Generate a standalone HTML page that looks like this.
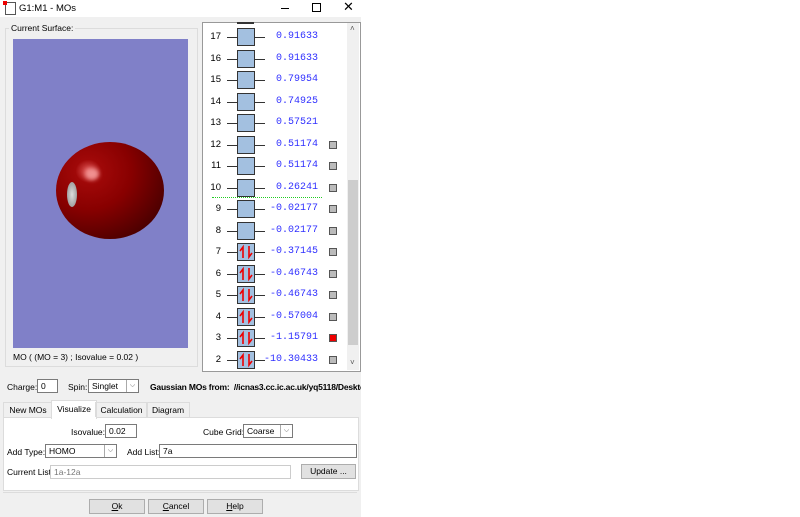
<!DOCTYPE html>
<html><head><style>
body{margin:0;width:800px;height:517px;background:#fff;font-family:"Liberation Sans",sans-serif;font-size:8.5px;color:#000;position:relative;overflow:hidden}
.win{position:absolute;left:0;top:0;width:361px;height:517px;background:#f0f0f0;overflow:hidden}
.a{position:absolute;white-space:nowrap}
.row{position:absolute;left:203px;height:18px;width:144px}
.num{position:absolute;left:0;width:18px;text-align:right;font-size:9.5px;top:3px}
.ln{position:absolute;left:24px;width:38px;top:9px;height:1px;background:#333}
.box{position:absolute;left:34px;top:0;width:16px;height:16px;background:#a3c0e0;border:1px solid #333}
.val{position:absolute;left:50px;width:65px;text-align:right;font-family:"Liberation Mono",monospace;font-size:10px;color:#3030ff;top:3px;white-space:nowrap}
.sq{position:absolute;left:126px;top:5px;width:6px;height:6px;background:#bbb;border:1px solid #555}
.box svg{position:absolute;left:0;top:0}
.inp{position:absolute;background:#fff;border:1px solid #7a7a7a;height:12px;font-size:8.5px;padding-left:3px;line-height:12px;white-space:nowrap}
.btn{position:absolute;background:#e1e1e1;border:1px solid #adadad;height:13px;text-align:center;font-size:8.5px;line-height:13px}
.dd{position:absolute;right:0;top:0;width:11px;height:12px;border-left:1px solid #aaa;font-size:7px;text-align:center;line-height:12px;color:#555}
</style></head><body>
<svg width="0" height="0" style="position:absolute"><defs><g id="ud"><path d="M5 14V3L2 7M11 2V13L14 9" stroke="#e00" stroke-width="1.6" fill="none"/></g></defs></svg>
<div class="win">
<div class="a" style="left:0;top:0;width:361px;height:17px;background:#fff"></div>
<div class="a" style="left:5px;top:2px;width:9px;height:11px;border:1px solid #555;background:#fff"></div>
<div class="a" style="left:3px;top:1px;width:4px;height:4px;background:#e00"></div>
<div class="a" style="left:19px;top:3px;font-size:9.5px">G1:M1 - MOs</div>
<div class="a" style="left:281px;top:8px;width:8px;height:1px;background:#000"></div>
<div class="a" style="left:312px;top:3px;width:7px;height:7px;border:1px solid #000"></div>
<div class="a" style="left:343px;top:-1px;font-size:13px">✕</div>

<div class="a" style="left:5px;top:28px;width:191px;height:337px;border:1px solid #dcdcdc"></div>
<div class="a" style="left:9px;top:23px;background:#f0f0f0;padding:0 2px">Current Surface:</div>
<div class="a" style="left:13px;top:39px;width:175px;height:309px;background:#8080c8;overflow:hidden">
<div class="a" style="left:43px;top:103px;width:108px;height:97px;border-radius:50%;background:radial-gradient(ellipse at 30% 30%,#e35a5a 0%,#a00808 12%,#880000 40%,#4a0000 80%,#2a0000 100%)"></div>
<div class="a" style="left:72px;top:129px;width:14px;height:12px;border-radius:50%;background:#f09090;filter:blur(2px)"></div>
<div class="a" style="left:54px;top:143px;width:10px;height:25px;border-radius:50%;background:radial-gradient(#ddd,#888)"></div>
</div>
<div class="a" style="left:13px;top:352px">MO ( (MO = 3) ; Isovalue = 0.02 )</div>

<div class="a" style="left:202px;top:22px;width:157px;height:348px;background:#fff;border:1px solid #999"></div>
<div class="a" style="left:347px;top:23px;width:12px;height:347px;background:#f0f0f0"></div>
<div class="a" style="left:348px;top:180px;width:10px;height:165px;background:#cdcdcd"></div>
<div class="a" style="left:350px;top:24px;font-size:8px;color:#555">˄</div>
<div class="a" style="left:350px;top:358px;font-size:8px;color:#555">˅</div>
<div class="a" style="left:237px;top:22px;width:17px;height:2px;background:#333"></div>
<div class="a" style="left:212px;top:197px;width:110px;border-top:1px dotted #2c2"></div>

<div class="row" style="top:28px"><div class="num">17</div><div class="ln"></div><div class="box"></div><div class="val">0.91633</div></div>
<div class="row" style="top:50px"><div class="num">16</div><div class="ln"></div><div class="box"></div><div class="val">0.91633</div></div>
<div class="row" style="top:71px"><div class="num">15</div><div class="ln"></div><div class="box"></div><div class="val">0.79954</div></div>
<div class="row" style="top:93px"><div class="num">14</div><div class="ln"></div><div class="box"></div><div class="val">0.74925</div></div>
<div class="row" style="top:114px"><div class="num">13</div><div class="ln"></div><div class="box"></div><div class="val">0.57521</div></div>
<div class="row" style="top:136px"><div class="num">12</div><div class="ln"></div><div class="box"></div><div class="val">0.51174</div><div class="sq"></div></div>
<div class="row" style="top:157px"><div class="num">11</div><div class="ln"></div><div class="box"></div><div class="val">0.51174</div><div class="sq"></div></div>
<div class="row" style="top:179px"><div class="num">10</div><div class="ln"></div><div class="box"></div><div class="val">0.26241</div><div class="sq"></div></div>
<div class="row" style="top:200px"><div class="num">9</div><div class="ln"></div><div class="box"></div><div class="val">-0.02177</div><div class="sq"></div></div>
<div class="row" style="top:222px"><div class="num">8</div><div class="ln"></div><div class="box"></div><div class="val">-0.02177</div><div class="sq"></div></div>
<div class="row" style="top:243px"><div class="num">7</div><div class="ln"></div><div class="box"><svg width="16" height="16"><use href="#ud"/></svg></div><div class="val">-0.37145</div><div class="sq"></div></div>
<div class="row" style="top:265px"><div class="num">6</div><div class="ln"></div><div class="box"><svg width="16" height="16"><use href="#ud"/></svg></div><div class="val">-0.46743</div><div class="sq"></div></div>
<div class="row" style="top:286px"><div class="num">5</div><div class="ln"></div><div class="box"><svg width="16" height="16"><use href="#ud"/></svg></div><div class="val">-0.46743</div><div class="sq"></div></div>
<div class="row" style="top:308px"><div class="num">4</div><div class="ln"></div><div class="box"><svg width="16" height="16"><use href="#ud"/></svg></div><div class="val">-0.57004</div><div class="sq"></div></div>
<div class="row" style="top:329px"><div class="num">3</div><div class="ln"></div><div class="box"><svg width="16" height="16"><use href="#ud"/></svg></div><div class="val">-1.15791</div><div class="sq" style="background:#e00"></div></div>
<div class="row" style="top:351px"><div class="num">2</div><div class="ln"></div><div class="box"><svg width="16" height="16"><use href="#ud"/></svg></div><div class="val">-10.30433</div><div class="sq"></div></div>

<div class="a" style="left:7px;top:382px">Charge:</div>
<div class="inp" style="left:37px;top:379px;width:16px">0</div>
<div class="a" style="left:68px;top:382px">Spin:</div>
<div class="inp" style="left:88px;top:379px;width:46px">Singlet<div class="dd">⌵</div></div>
<div class="a" style="left:150px;top:382px;font-weight:bold;letter-spacing:-0.2px">Gaussian MOs from:&nbsp; //icnas3.cc.ic.ac.uk/yq5118/Deskto</div>

<div class="a" style="left:3px;top:417px;width:354px;height:72px;background:#fff;border:1px solid #dcdcdc"></div>
<div class="a" style="left:3px;top:402px;width:48px;height:14px;border:1px solid #dcdcdc;border-bottom:none;text-align:center;line-height:14px">New MOs</div>
<div class="a" style="left:51px;top:400px;width:44px;height:18px;background:#fff;border:1px solid #dcdcdc;border-bottom:none;text-align:center;line-height:16px">Visualize</div>
<div class="a" style="left:95px;top:402px;width:51px;height:14px;border:1px solid #dcdcdc;border-bottom:none;text-align:center;line-height:14px">Calculation</div>
<div class="a" style="left:146px;top:402px;width:42px;height:14px;border:1px solid #dcdcdc;border-bottom:none;text-align:center;line-height:14px">Diagram</div>

<div class="a" style="left:71px;top:427px">Isovalue:</div>
<div class="inp" style="left:105px;top:424px;width:27px">0.02</div>
<div class="a" style="left:203px;top:427px">Cube Grid:</div>
<div class="inp" style="left:243px;top:424px;width:45px">Coarse<div class="dd">⌵</div></div>
<div class="a" style="left:7px;top:447px">Add Type:</div>
<div class="inp" style="left:45px;top:444px;width:67px">HOMO<div class="dd">⌵</div></div>
<div class="a" style="left:127px;top:447px">Add List:</div>
<div class="inp" style="left:159px;top:444px;width:193px">7a</div>
<div class="a" style="left:7px;top:467px">Current List:</div>
<div class="inp" style="left:50px;top:465px;width:236px;color:#777;border-color:#ccc">1a-12a</div>
<div class="btn" style="left:301px;top:464px;width:53px">Update ...</div>

<div class="a" style="left:3px;top:492px;width:354px;height:1px;background:#dcdcdc"></div>
<div class="btn" style="left:89px;top:499px;width:54px"><u>O</u>k</div>
<div class="btn" style="left:148px;top:499px;width:54px"><u>C</u>ancel</div>
<div class="btn" style="left:207px;top:499px;width:54px"><u>H</u>elp</div>
</div>
</body></html>
